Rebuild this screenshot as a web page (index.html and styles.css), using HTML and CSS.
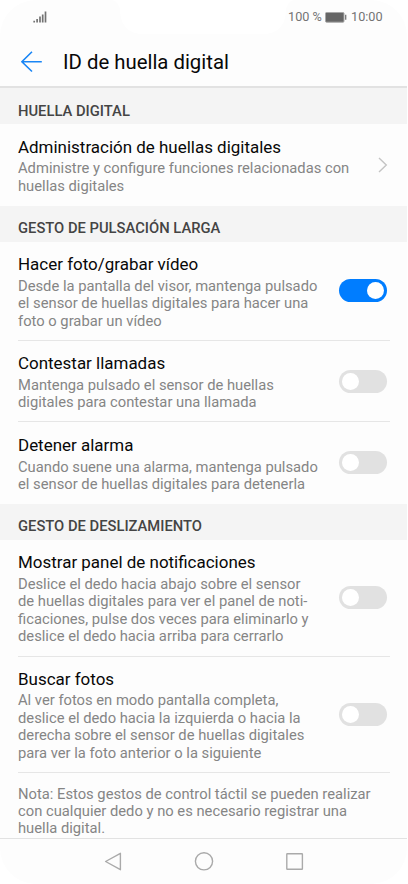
FILE: index.html
```html
<!DOCTYPE html>
<html lang="es">
<head>
<meta charset="utf-8">
<title>ID de huella digital</title>
<link rel="stylesheet" href="styles.css">
</head>
<body>
<div class="phone">
  <header class="status">
    <svg class="signal" width="14" height="12" viewBox="0 0 14 12"><path d="M1.2 11.5V9.8M4.1 11.5V8M7 11.5V5.5M9.7 11.5V3.5M12.5 11.5V.5" stroke="#737373" stroke-width="1.7"/></svg>
    <svg class="notch" width="182" height="34" viewBox="0 0 182 34"><path d="M0 0Q8 2 8 12Q10 34 32 34H150Q172 34 174 12Q174 2 182 0z" fill="#fff"/></svg>
    <span class="percent">100 %</span>
    <svg class="battery" width="22" height="11" viewBox="0 0 22 11"><rect x=".5" y=".5" width="18.5" height="9.7" rx="1" fill="#666" stroke="#a8a8a8"/><path d="M20.7 2.8v5" stroke="#777" stroke-width="1.3"/></svg>
    <span class="clock">10:00</span>
  </header>
  <div class="appbar">
    <svg class="back" width="22" height="22" viewBox="0 0 22 22"><path d="M20.8 10.7H1M11 .8L.9 10.7 11 20.5" fill="none" stroke="#1a86f5" stroke-width="1.6"/></svg>
    <h1>ID de huella digital</h1>
  </div>
  <main>
    <h2 class="first">HUELLA DIGITAL</h2>
    <section class="item admin">
      <div><h3>Administración de huellas digitales</h3>
      <p>Administre y configure funciones relacionadas con<br>huellas digitales</p></div>
      <svg class="chevron" width="10" height="16" viewBox="0 0 10 16"><path d="M1 1l7.3 7L1 15" fill="none" stroke="#c4c4c4" stroke-width="1.4"/></svg>
    </section>
    <h2>GESTO DE PULSACIÓN LARGA</h2>
    <section class="item photo">
      <div><h3>Hacer foto/grabar vídeo</h3>
      <p>Desde la pantalla del visor, mantenga pulsado<br>el sensor de huellas digitales para hacer una<br>foto o grabar un vídeo</p></div>
      <span class="toggle on"></span>
    </section>
    <section class="item calls ruled">
      <div><h3>Contestar llamadas</h3>
      <p>Mantenga pulsado el sensor de huellas<br>digitales para contestar una llamada</p></div>
      <span class="toggle"></span>
    </section>
    <section class="item alarm ruled">
      <div><h3>Detener alarma</h3>
      <p>Cuando suene una alarma, mantenga pulsado<br>el sensor de huellas digitales para detenerla</p></div>
      <span class="toggle"></span>
    </section>
    <h2>GESTO DE DESLIZAMIENTO</h2>
    <section class="item panel">
      <div><h3>Mostrar panel de notificaciones</h3>
      <p>Deslice el dedo hacia abajo sobre el sensor<br>de huellas digitales para ver el panel de noti-<br>ficaciones, pulse dos veces para eliminarlo y<br>deslice el dedo hacia arriba para cerrarlo</p></div>
      <span class="toggle"></span>
    </section>
    <section class="item search ruled">
      <div><h3>Buscar fotos</h3>
      <p>Al ver fotos en modo pantalla completa,<br>deslice el dedo hacia la izquierda o hacia la<br>derecha sobre el sensor de huellas digitales<br>para ver la foto anterior o la siguiente</p></div>
      <span class="toggle"></span>
    </section>
    <div class="note ruled"><p>Nota: Estos gestos de control táctil se pueden realizar<br>con cualquier dedo y no es necesario registrar una<br>huella digital.</p></div>
  </main>
  <nav>
    <svg width="18" height="20" viewBox="0 0 18 20"><path d="M16.4 1.3v16.4L1.6 9.5z" fill="none" stroke="#aaa" stroke-width="1.4" stroke-linejoin="round"/></svg>
    <svg width="20" height="20" viewBox="0 0 20 20"><circle cx="10" cy="9.3" r="8.6" fill="none" stroke="#aaa" stroke-width="1.4"/></svg>
    <svg width="18" height="18" viewBox="0 0 18 18"><rect x=".8" y=".7" width="15.6" height="15.6" rx=".5" fill="none" stroke="#aaa" stroke-width="1.4"/></svg>
  </nav>
</div>
</body>
</html>
```
FILE: styles.css
```css
* { box-sizing: border-box; }
body { margin: 0; background: #fff; font-family: Roboto, sans-serif; }
h1, h2, h3, p { margin: 0; font-weight: 400; white-space: nowrap; }
svg { display: block; flex: none; }
.phone {
  width: 407px;
  height: 884px;
  display: flex;
  flex-direction: column;
  overflow: hidden;
  background: #fdfdfd;
  border-radius: 36px;
}
.status {
  height: 34px;
  display: flex;
  align-items: flex-start;
  padding-left: 33px;
  color: #737373;
  font-size: 12.7px;
  line-height: 16px;
}
.signal { margin-top: 11px; }
.notch { margin: 0 -8px 0 65px; }
.percent { width: 35px; margin: 9px 2px 0 2px; white-space: nowrap; }
.battery { margin-top: 12px; }
.clock { margin: 9px 0 0 4px; }
.appbar {
  height: 54px;
  display: flex;
  align-items: center;
  gap: 20px;
  padding: 3px 0 0 21px;
  border-bottom: 2px solid #e2e2e2;
}
.appbar h1 { font-size: 20.35px; line-height: 26px; color: #080808; }
h2 {
  height: 36px;
  padding: 13px 18px 0;
  background: #f4f4f4;
  color: #444;
  font-size: 14.75px;
  font-weight: 500;
  line-height: 18px;
}
.first { padding-top: 14px; }
.item {
  display: flex;
  justify-content: space-between;
  margin: 0 17px 0 18px;
  padding-top: 12px;
}
.ruled { border-top: 1px solid #e6e6e6; }
h3 { margin-bottom: 4px; font-size: 16.97px; line-height: 20px; color: #080808; }
p { font-size: 14.76px; line-height: 17.4px; color: #858585; }
.admin { height: 82px; padding-top: 13px; }
.admin h3 { margin-bottom: 3.3px; }
.photo { height: 98px; }
.calls { height: 81px; }
.alarm { height: 83px; padding-top: 13px; }
.alarm h3 { margin-bottom: 3.5px; }
.panel { height: 116px; }
.search { height: 116px; }
.search h3 { margin-bottom: 3.4px; }
.chevron { margin: 20px 2px 0 0; }
.toggle {
  width: 48px;
  height: 23px;
  flex: none;
  margin-right: 3px;
  padding: 3px;
  border-radius: 12px;
  background: #e1e1e1;
}
.toggle::before {
  content: "";
  display: block;
  width: 17px;
  height: 17px;
  border-radius: 50%;
  background: #fff;
}
.on { background: #007dff; }
.on::before { margin-left: auto; }
.photo .toggle { margin-top: 25px; }
.calls .toggle { margin-top: 17px; }
.alarm .toggle { margin-top: 16px; }
.panel .toggle { margin-top: 34px; }
.search .toggle { margin-top: 34px; }
.note { height: 66px; margin: 0 17px 0 18px; padding-top: 12.5px; }
nav {
  flex: 1;
  display: flex;
  align-items: center;
  justify-content: space-between;
  padding: 0 103px 0 104px;
  border-top: 1px solid #e2e2e2;
}
```
